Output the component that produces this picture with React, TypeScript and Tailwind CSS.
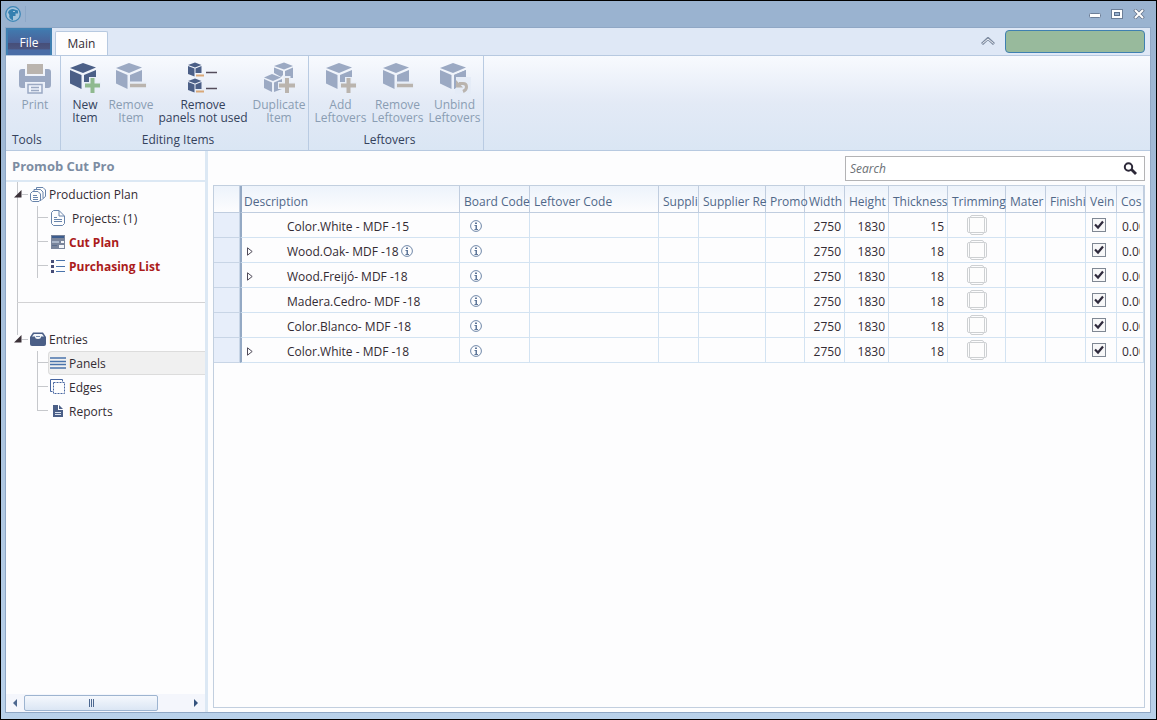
import type { ReactNode } from 'react';

type CubeProps = { color: string; accent: string; mark: 'plus' | 'minus' | 'undo' };

const DARK = '#4b5f87';
const FADED = '#9ba9c3';
const TAUPE = '#bab4ae';

// Ribbon icons
function CubeIcon({ color, accent, mark }: CubeProps) {
  return (
    <svg width="32" height="32" viewBox="0 0 32 32" aria-hidden="true">
      <path d="M1 6 14 1 27 5.5 14 11Z" fill={color} />
      <path d="M1 8 12.5 13V27L1 21.5Z" fill={color} />
      <path d="M15 13 27 8V21.5L15 27Z" fill={color} />
      {mark === 'plus' && (
        <>
          <path d="M23.5 15V32M15 23.5H32" stroke="#e8eef8" strokeWidth="7" />
          <path d="M23.5 16V31M16 23.5H31" stroke={accent} strokeWidth="4" />
        </>
      )}
      {mark === 'minus' && (
        <>
          <path d="M14 23.5H32" stroke="#e8eef8" strokeWidth="8" />
          <path d="M15 23.5H31" stroke={accent} strokeWidth="3.5" />
        </>
      )}
      {mark === 'undo' && (
        <>
          <path d="M16 15H32V32H16Z" fill="#e5ecf7" />
          <path d="M15 13 27 8V15H17V26L15 27Z" fill={color} />
          <path d="M20 21.5H24Q27.500 21.500 27.500 25 27.500 28 24 29.500" fill="none" stroke={accent} strokeWidth="3" />
          <path d="M17 18V25.500H24Z" fill={accent} />
        </>
      )}
    </svg>
  );
}

function SmallCube({ y }: { y: number }) {
  return (
    <g transform={`translate(0 ${y})`}>
      <path d="M1 3 8 .5 14.500 3 8 5.500Z" fill={DARK} />
      <path d="M1 4 7.500 6.500V14.500L1 12Z" fill={DARK} />
      <path d="M8.500 6.500 14.500 4V11H8.500Z" fill={DARK} />
      <path d="M9 13.500H17" stroke="#d9a878" strokeWidth="2" />
      <path d="M19 10.500H30" stroke="#554d5c" strokeWidth="1.500" />
    </g>
  );
}

function UnusedIcon() {
  return (
    <svg width="32" height="32" viewBox="0 0 32 32" aria-hidden="true">
      <SmallCube y={0} />
      <SmallCube y={16} />
    </svg>
  );
}

function DuplicateIcon() {
  return (
    <svg width="32" height="32" viewBox="0 0 32 32" aria-hidden="true">
      <g fill={FADED}>
        <path d="M11 4 21 .500 30 4 21 7.500Z" />
        <path d="M11 5.500 20 9V13L18 15 11 11Z" />
        <path d="M22 9 30 5.500V16H22Z" />
        <path d="M1 15.500 9 12 18 15.500 10 19Z" />
        <path d="M1 17 9 20.500V30L1 26Z" />
        <path d="M11 20.500 19 17V27L11 30Z" />
      </g>
      <path d="M24 14V32M15 23.500H32" stroke="#e8eef8" strokeWidth="7" />
      <path d="M24 16V31M16 23.500H32" stroke={TAUPE} strokeWidth="4" />
    </svg>
  );
}

function PrinterIcon() {
  return (
    <svg width="32" height="32" viewBox="0 0 32 32" aria-hidden="true">
      <path d="M8 2H24V12H8Z" fill={TAUPE} />
      <path d="M0 10Q0 7 3 7H6V14H26V7H29Q32 7 32 10V23Q32 26 29 26H26V20H6V26H3Q0 26 0 23Z" fill={FADED} />
      <path d="M5 14H27V20H5Z" fill={FADED} />
      <path d="M9 22.500H23V31H9ZM12 25.500H20M12 28.500H20" fill="#eef3fb" stroke={FADED} strokeWidth="1.500" />
    </svg>
  );
}

type RibbonButtonProps = { icon: ReactNode; lines: string[]; width: string; disabled?: boolean };

function RibbonButton({ icon, lines, width, disabled }: RibbonButtonProps) {
  return (
    <button
      type="button"
      disabled={disabled}
      className={`flex flex-col items-center pt-[6px] leading-[13px] whitespace-nowrap ${width} ${disabled ? 'text-[#8a9db3]' : 'text-[#34425c]'}`}
    >
      {icon}
      <span className="mt-1">
        {lines.map((line) => (
          <span key={line} className="block">{line}</span>
        ))}
      </span>
    </button>
  );
}

function RibbonGroup({ title, pad, titlePad, children }: { title: string; pad: string; titlePad: string; children: ReactNode }) {
  return (
    <section className={`flex flex-col border-r border-[#b9cbe2] ${pad}`}>
      <div className="flex flex-1 items-start">{children}</div>
      <h2 className={`h-5 leading-5 text-[#34425c] ${titlePad}`}>{title}</h2>
    </section>
  );
}

// Navigation tree
function Expander() {
  return (
    <svg width="8" height="8" viewBox="0 0 8 8" className="shrink-0" aria-hidden="true">
      <path d="M7.500 0V7.500H0Z" fill="#3b3138" />
    </svg>
  );
}

function StackIcon() {
  return (
    <svg width="16" height="17" viewBox="0 0 16 17" fill="#fdfdfd" stroke="#6884ab" aria-hidden="true">
      <path d="M6.500 1.500H13L15.500 4V10.500L13 12.500H6.500Z" />
      <path d="M4 3.500H10.500L13 6V12.500L11 14.500H4Z" />
      <path d="M2.500 5.500H8L10.500 8V14L9 15.500H2.500L.500 14V7.500Z" />
      <path d="M3 9.500H7M3 11.500H8M3 13.500H8" />
    </svg>
  );
}

function DocumentIcon() {
  return (
    <svg width="16" height="16" viewBox="0 0 16 16" fill="none" stroke="#6884ab" aria-hidden="true">
      <path d="M3.500 .500H9L14.500 6V13.500L12.500 15.500H3.500L1.500 13.500V2.500Z" />
      <path d="M9 .500V6H14M4 7.500H7M4 9.500H12M4 11.500H12" />
    </svg>
  );
}

function CutPlanIcon() {
  return (
    <svg width="16" height="16" viewBox="0 0 16 16" aria-hidden="true">
      <path d="M1 1H15V15H1Z" fill="#7a859b" />
      <path d="M2 2H14V4H2Z" fill="#3c5c8e" />
      <path d="M2 7H9V9H2Z" fill="#aab6c9" />
      <path d="M11 7H14V9H11ZM9 11H14V14H9Z" fill="#f2f4f8" />
      <path d="M2 11H7V12H2Z" fill="#5d6f8e" />
    </svg>
  );
}

function ListIcon() {
  return (
    <svg width="16" height="16" viewBox="0 0 16 16" aria-hidden="true">
      <path d="M1 2H4V5H1ZM1 7H4V10H1ZM1 12H4V15H1Z" fill="#474e78" />
      <path d="M6 2.500H15M6 8.500H15M6 13.500H15" stroke="#4973ab" />
    </svg>
  );
}

function DrawerIcon() {
  return (
    <svg width="16" height="15" viewBox="0 0 16 15" aria-hidden="true">
      <path d="M0 5 3 .500H13L16 5V12Q16 14 14 14H2Q0 14 0 12Z" fill={DARK} />
      <path d="M2 4.500 4 2H12L14 4.500H11Q11 7 8 7 5 7 5 4.500Z" fill="#f4f7fb" />
      <path d="M6 4H10V5H6Z" fill="#7389ad" />
    </svg>
  );
}

function PanelsIcon() {
  return (
    <svg width="16" height="16" viewBox="0 0 16 16" aria-hidden="true">
      <path d="M0 3H16M0 6.500H16M0 9.500H16M0 13H16" stroke="#4973ab" strokeWidth="1.500" />
    </svg>
  );
}

function EdgesIcon() {
  return (
    <svg width="16" height="16" viewBox="0 0 16 16" fill="none" stroke="#4665a0" aria-hidden="true">
      <path d="M2.500 12.500H.500V.500H12.500V2.500" />
      <path d="M3.500 3.500H14.500V14.500H3.500Z" strokeDasharray="2 1" />
    </svg>
  );
}

function ReportIcon() {
  return (
    <svg width="16" height="16" viewBox="0 0 16 16" aria-hidden="true">
      <path d="M3 2H8V7H13V14H3Z" fill={DARK} />
      <path d="M9 2 13 6H9Z" fill={DARK} />
      <path d="M5 9.500H11M5 11.500H11" stroke="#dbe3ef" />
    </svg>
  );
}

type LeafProps = { icon: ReactNode; label: string; state?: 'alert' | 'selected'; last?: boolean };

function TreeLeaf({ icon, label, state, last }: LeafProps) {
  return (
    <li className="flex h-6">
      <span className="flex w-[11px] shrink-0 flex-col">
        <span className="h-3 border-b border-l border-[#c6c8cc]" />
        <span className={`h-3 ${last ? '' : 'border-l border-[#c6c8cc]'}`} />
      </span>
      <a
        href="#"
        className={`flex flex-1 items-center gap-[3px] whitespace-nowrap ${
          state === 'selected' ? 'rounded-l border border-r-0 border-[#dcdcdc] bg-[#f0f0f0] pl-px' : 'pl-[2px]'
        } ${state === 'alert' ? 'font-bold text-[#ab1b1b]' : 'text-[#332b33]'}`}
      >
        {icon}
        <span className="pt-[2px] whitespace-pre">{label}</span>
      </a>
    </li>
  );
}

function TreeRoot({ icon, label, children }: { icon: ReactNode; label: string; children: ReactNode }) {
  return (
    <li>
      <div className="flex h-6 items-center pl-2 text-[#332b33]">
        <Expander />
        <span className="mr-[2px] h-px w-[6px] bg-[#c6c8cc]" />
        {icon}
        <span className="ml-[3px] pt-[2px]">{label}</span>
      </div>
      <ul className="pl-[31px]">{children}</ul>
    </li>
  );
}

function Sidebar() {
  return (
    <aside className="flex w-[202px] shrink-0 flex-col border-r-3 border-[#dce8f4] bg-[#fdfdfe]">
      <h1 className="h-[31px] border-b-2 border-[#dce8f4] pl-[6px] text-[13px] leading-[30px] font-bold text-[#7c8ca2]">
        Promob Cut Pro
      </h1>
      <nav className="flex-1 leading-4">
        <ul className="bg-[linear-gradient(#c6c8cc,#c6c8cc)] bg-[length:1px_100%] bg-[position:11px_0] bg-no-repeat pb-6">
          <TreeRoot icon={<StackIcon />} label="Production Plan">
            <TreeLeaf icon={<DocumentIcon />} label=" Projects: (1)" />
            <TreeLeaf icon={<CutPlanIcon />} label="Cut Plan" state="alert" />
            <TreeLeaf icon={<ListIcon />} label="Purchasing List" state="alert" />
          </TreeRoot>
        </ul>
        <hr className="ml-[11px] border-[#d2d2d4]" />
        <div className="-mb-2 ml-[11px] h-8 border-l border-[#c6c8cc]" />
        <ul>
          <TreeRoot icon={<DrawerIcon />} label="Entries">
            <TreeLeaf icon={<PanelsIcon />} label="Panels" state="selected" />
            <TreeLeaf icon={<EdgesIcon />} label="Edges" />
            <TreeLeaf icon={<ReportIcon />} label="Reports" last />
          </TreeRoot>
        </ul>
      </nav>
      <div className="flex h-[18px] items-center bg-[#f4f6fc]">
        <button type="button" aria-label="Scroll left" className="flex h-4 w-[18px] items-center justify-center">
          <svg width="4" height="8" viewBox="0 0 4 8"><path d="M4 0V8L0 4Z" fill="#4d6890" /></svg>
        </button>
        <button type="button" aria-label="Scroll bar" className="flex h-4 w-[134px] items-center justify-center gap-px rounded-xs border border-[#9db4d0] bg-linear-to-b from-[#f5f8fd] to-[#dbe6f4]">
          <span className="h-2 w-px bg-[#4d6890]" />
          <span className="h-2 w-px bg-[#4d6890]" />
          <span className="h-2 w-px bg-[#4d6890]" />
        </button>
        <button type="button" aria-label="Scroll right" className="ml-auto flex h-4 w-[18px] items-center justify-center">
          <svg width="4" height="8" viewBox="0 0 4 8"><path d="M0 0V8L4 4Z" fill="#34527d" /></svg>
        </button>
      </div>
    </aside>
  );
}

// Panels grid
const COLUMNS = [
  { label: 'Description', width: 'w-[220px]' },
  { label: 'Board Code', width: 'w-[70px]' },
  { label: 'Leftover Code', width: '' },
  { label: 'Suppli', width: 'w-[40px]' },
  { label: 'Supplier Re', width: 'w-[67px]' },
  { label: 'Promo', width: 'w-[39px]' },
  { label: 'Width', width: 'w-[40px]' },
  { label: 'Height', width: 'w-[44px]' },
  { label: 'Thickness', width: 'w-[59px]' },
  { label: 'Trimming', width: 'w-[58px]' },
  { label: 'Mater', width: 'w-[40px]' },
  { label: 'Finishi', width: 'w-[40px]' },
  { label: 'Vein', width: 'w-[31px]' },
  { label: 'Cos', width: 'w-[27px]' },
];

const PANELS = [
  { name: 'Color.White - MDF -15', thickness: 15 },
  { name: 'Wood.Oak- MDF -18', thickness: 18, children: true, info: true },
  { name: 'Wood.Freijó- MDF -18', thickness: 18, children: true },
  { name: 'Madera.Cedro- MDF -18', thickness: 18 },
  { name: 'Color.Blanco- MDF -18', thickness: 18 },
  { name: 'Color.White - MDF -18', thickness: 18, children: true },
];

function InfoIcon() {
  return (
    <svg width="12" height="12" viewBox="0 0 12 12" aria-hidden="true">
      <circle cx="6" cy="6" r="5.400" fill="none" stroke="#6f87a8" />
      <path d="M5 2.500H7V4H5ZM4.500 5H7V9H8V10H4.500V9H5.500V6H4.500Z" fill="#5f7799" />
    </svg>
  );
}

function TrimmingIcon() {
  return (
    <svg width="20" height="20" viewBox="0 0 20 20" fill="none" stroke="#cdd0d2" aria-hidden="true">
      <rect x="3.500" y=".500" width="13" height="19" rx="1.500" />
      <rect x=".500" y="2.500" width="19" height="15" rx="1.500" />
      <rect x="2.500" y="2.500" width="15" height="15" rx="1" fill="#fdfdfd" />
    </svg>
  );
}

function VeinCheckbox({ name }: { name: string }) {
  return (
    <span className="ml-[3px] grid w-[14px]">
      <input
        type="checkbox"
        defaultChecked
        aria-label={`Vein for ${name}`}
        className="col-start-1 row-start-1 size-[14px] appearance-none border border-[#7f8793] bg-[#f7f7f8]"
      />
      <svg width="14" height="14" viewBox="0 0 14 14" className="pointer-events-none col-start-1 row-start-1" aria-hidden="true">
        <path d="M3 6.500 6 9.500 11 3.500" fill="none" stroke="#2f2a3c" strokeWidth="2.200" />
      </svg>
    </span>
  );
}

function PanelsTable() {
  const cell = 'overflow-hidden border-r border-b border-[#d3e3f2] px-[3px]';

  return (
    <div className="flex-1 border border-[#c2cfdf] bg-[#fdfdfe]">
      <table className="w-full table-fixed border-separate border-spacing-0 whitespace-nowrap">
        <thead>
          <tr className="h-[27px] bg-linear-to-b from-[#edf3fb] to-[#fdfdfe] text-[#506889]">
            <th className="w-[26px] border-r border-b border-[#c0cddf]" aria-label="Row selector" />
            {COLUMNS.map((col, i) => (
              <th
                key={col.label}
                className={`border-r border-b border-[#c0cddf] pt-[6px] text-left font-normal ${col.width} ${
                  i === 0 ? 'border-l-2 border-l-[#94a9c4] pl-[2px]' : 'pl-1'
                }`}
              >
                {col.label}
              </th>
            ))}
          </tr>
        </thead>
        <tbody className="text-[#332b33]">
          {PANELS.map((panel, i) => (
            <tr key={i} className="h-[25px]">
              <td className="border-r border-b border-[#c8d5e6] bg-[#e7eefa]" />
              <td className={`border-l-2 border-l-[#94a9c4] ${cell}`}>
                <div className="flex items-center pt-[2px]">
                  <span className="w-[42px]">
                    {panel.children && (
                      <button type="button" aria-label={`Expand ${panel.name}`} className="ml-[2px] block">
                        <svg width="6" height="9" viewBox="0 0 6 9">
                          <path d="M.500 .800V8.200L5.200 4.500Z" fill="none" stroke="#4f4a58" />
                        </svg>
                      </button>
                    )}
                  </span>
                  <span className="mr-[2px] pt-[2px]">{panel.name}</span>
                  {panel.info && <InfoIcon />}
                </div>
              </td>
              <td className={cell}>
                <span className="block pt-[2px] pl-[7px]"><InfoIcon /></span>
              </td>
              <td className={cell} />
              <td className={cell} />
              <td className={cell} />
              <td className={cell} />
              <td className={`${cell} pt-1 text-right`}>2750</td>
              <td className={`${cell} pt-1 text-right`}>1830</td>
              <td className={`${cell} pt-1 text-right`}>{panel.thickness}</td>
              <td className={cell}>
                <button type="button" aria-label={`Trimming for ${panel.name}`} className="mx-auto block">
                  <TrimmingIcon />
                </button>
              </td>
              <td className={cell} />
              <td className={cell} />
              <td className={cell}><VeinCheckbox name={panel.name} /></td>
              <td className={`${cell} pt-1 pl-[5px]`}>
                <span className="block overflow-hidden">0.00</span>
              </td>
            </tr>
          ))}
        </tbody>
      </table>
    </div>
  );
}

function TitleBar() {
  return (
    <header className="flex h-[26px] shrink-0 items-center bg-[#9ab3d0] pr-[6px]">
      <svg width="16" height="16" viewBox="0 0 16 16" aria-hidden="true">
        <circle cx="8" cy="8" r="7.300" fill="#a5c4dc" stroke="#3f87b6" strokeWidth="1.300" />
        <path d="M3 6.500Q4 3 8 3L13 4.500V7.500H10.500V10H8V14.500Q3 12 4.500 9Z" fill="#3580b0" />
        <path d="M8 5.500H10" stroke="#a5c4dc" />
      </svg>
      <span className="ml-1 h-4 w-px bg-[#8da8c8]" />
      <div className="ml-auto flex items-center gap-[10px]">
        <button type="button" aria-label="Minimize">
          <svg width="12" height="10" viewBox="0 0 12 10"><rect x=".500" y="4.500" width="11" height="4" rx="1" fill="#fff" stroke="#6d7f98" /></svg>
        </button>
        <button type="button" aria-label="Maximize">
          <svg width="12" height="10" viewBox="0 0 12 10">
            <rect x=".500" y=".500" width="11" height="9" fill="#fff" stroke="#6d7f98" />
            <rect x="3.500" y="3.500" width="5" height="3" fill="#9ab3d0" stroke="#5b6f8c" />
          </svg>
        </button>
        <button type="button" aria-label="Close">
          <svg width="12" height="10" viewBox="0 0 12 10">
            <path d="M1.500 .500 10.500 9.500M10.500 .500 1.500 9.500" stroke="#66748a" strokeWidth="3.500" />
            <path d="M2 1 10 9M10 1 2 9" stroke="#fff" strokeWidth="2" />
          </svg>
        </button>
      </div>
    </header>
  );
}

function Ribbon() {
  return (
    <div className="flex h-[96px] shrink-0 overflow-hidden border-y border-[#b7c9e0] bg-linear-to-b from-[#f8fafe] via-[#e3eaf6] to-[#dae6f4]">
      <RibbonGroup title="Tools" pad="pl-[6px] pr-[2px]" titlePad="text-left">
        <RibbonButton icon={<PrinterIcon />} lines={['Print']} width="w-[46px]" disabled />
      </RibbonGroup>
      <RibbonGroup title="Editing Items" pad="pl-px pr-[2px]" titlePad="pr-3 text-center">
        <RibbonButton icon={<CubeIcon color={DARK} accent="#8fb98f" mark="plus" />} lines={['New', 'Item']} width="w-[46px]" />
        <RibbonButton icon={<CubeIcon color={FADED} accent={TAUPE} mark="minus" />} lines={['Remove', 'Item']} width="w-[46px]" disabled />
        <RibbonButton icon={<UnusedIcon />} lines={['Remove', 'panels not used']} width="w-[98px]" />
        <RibbonButton icon={<DuplicateIcon />} lines={['Duplicate', 'Item']} width="w-[54px]" disabled />
      </RibbonGroup>
      <RibbonGroup title="Leftovers" pad="pl-[3px]" titlePad="pr-4 text-center">
        <RibbonButton icon={<CubeIcon color={FADED} accent={TAUPE} mark="plus" />} lines={['Add', 'Leftovers']} width="w-[57px]" disabled />
        <RibbonButton icon={<CubeIcon color={FADED} accent={TAUPE} mark="minus" />} lines={['Remove', 'Leftovers']} width="w-[57px]" disabled />
        <RibbonButton icon={<CubeIcon color={FADED} accent={TAUPE} mark="undo" />} lines={['Unbind', 'Leftovers']} width="w-[57px]" disabled />
      </RibbonGroup>
    </div>
  );
}

export default function App() {
  return (
    <div className="flex min-h-screen flex-col border border-black bg-linear-to-b from-[#9ab3d0] to-[#b9d1ea] pr-[5px] pb-[6px] pl-1 font-['Open_Sans','Noto_Sans',sans-serif] text-[12px] leading-4">
      <TitleBar />
      <div className="flex flex-1 flex-col border border-[#8fa7c5] bg-[#dfe8f6]">
        <div className="flex h-[27px] shrink-0 items-end">
          <button type="button" className="h-[27px] w-[46px] border-2 border-b-0 border-[#3f80b1] bg-[linear-gradient(#4179ae_0%,#4a6299_50%,#464e78_52%,#4b5580_75%,#4a6da6_80%)] pt-px text-white">
            File
          </button>
          <button type="button" className="ml-[3px] h-6 w-[53px] rounded-t-xs border border-b-0 border-[#b7c9e0] bg-[#fdfdfe] text-[#332b33]">
            Main
          </button>
          <button type="button" aria-label="Collapse ribbon" className="mr-[10px] mb-[10px] ml-auto">
            <svg width="14" height="8" viewBox="0 0 14 8" fill="none">
              <path d="M1 7 7 1.500 13 7" stroke="#7d8ba1" strokeWidth="3" />
              <path d="M1.500 6.500 7 2 12.500 6.500" stroke="#f1f3f7" />
            </svg>
          </button>
          <button type="button" aria-label="Account" className="mr-[5px] mb-[2px] h-[23px] w-[140px] rounded-sm border border-[#3f80b1] bg-[#98ba9c]" />
        </div>
        <Ribbon />
        <div className="flex flex-1">
          <Sidebar />
          <main className="flex min-w-0 flex-1 flex-col bg-[#fdfdfe] px-[5px] pt-[5px] pb-1">
            <div className="mb-1 flex h-[25px] w-[300px] items-center self-end border border-[#b3b3b5] bg-white">
              <input
                type="text"
                aria-label="Search"
                placeholder="Search"
                className="min-w-0 flex-1 pl-1 italic outline-none placeholder:text-[#6c7075]"
              />
              <button type="button" aria-label="Run search" className="pr-[7px]">
                <svg width="14" height="13" viewBox="0 0 14 13" fill="none">
                  <circle cx="5.500" cy="5" r="3.700" stroke="#2c2838" strokeWidth="2" />
                  <path d="M8.500 7.500 13 12" stroke="#2c2838" strokeWidth="2.800" />
                </svg>
              </button>
            </div>
            <PanelsTable />
          </main>
        </div>
      </div>
    </div>
  );
}
